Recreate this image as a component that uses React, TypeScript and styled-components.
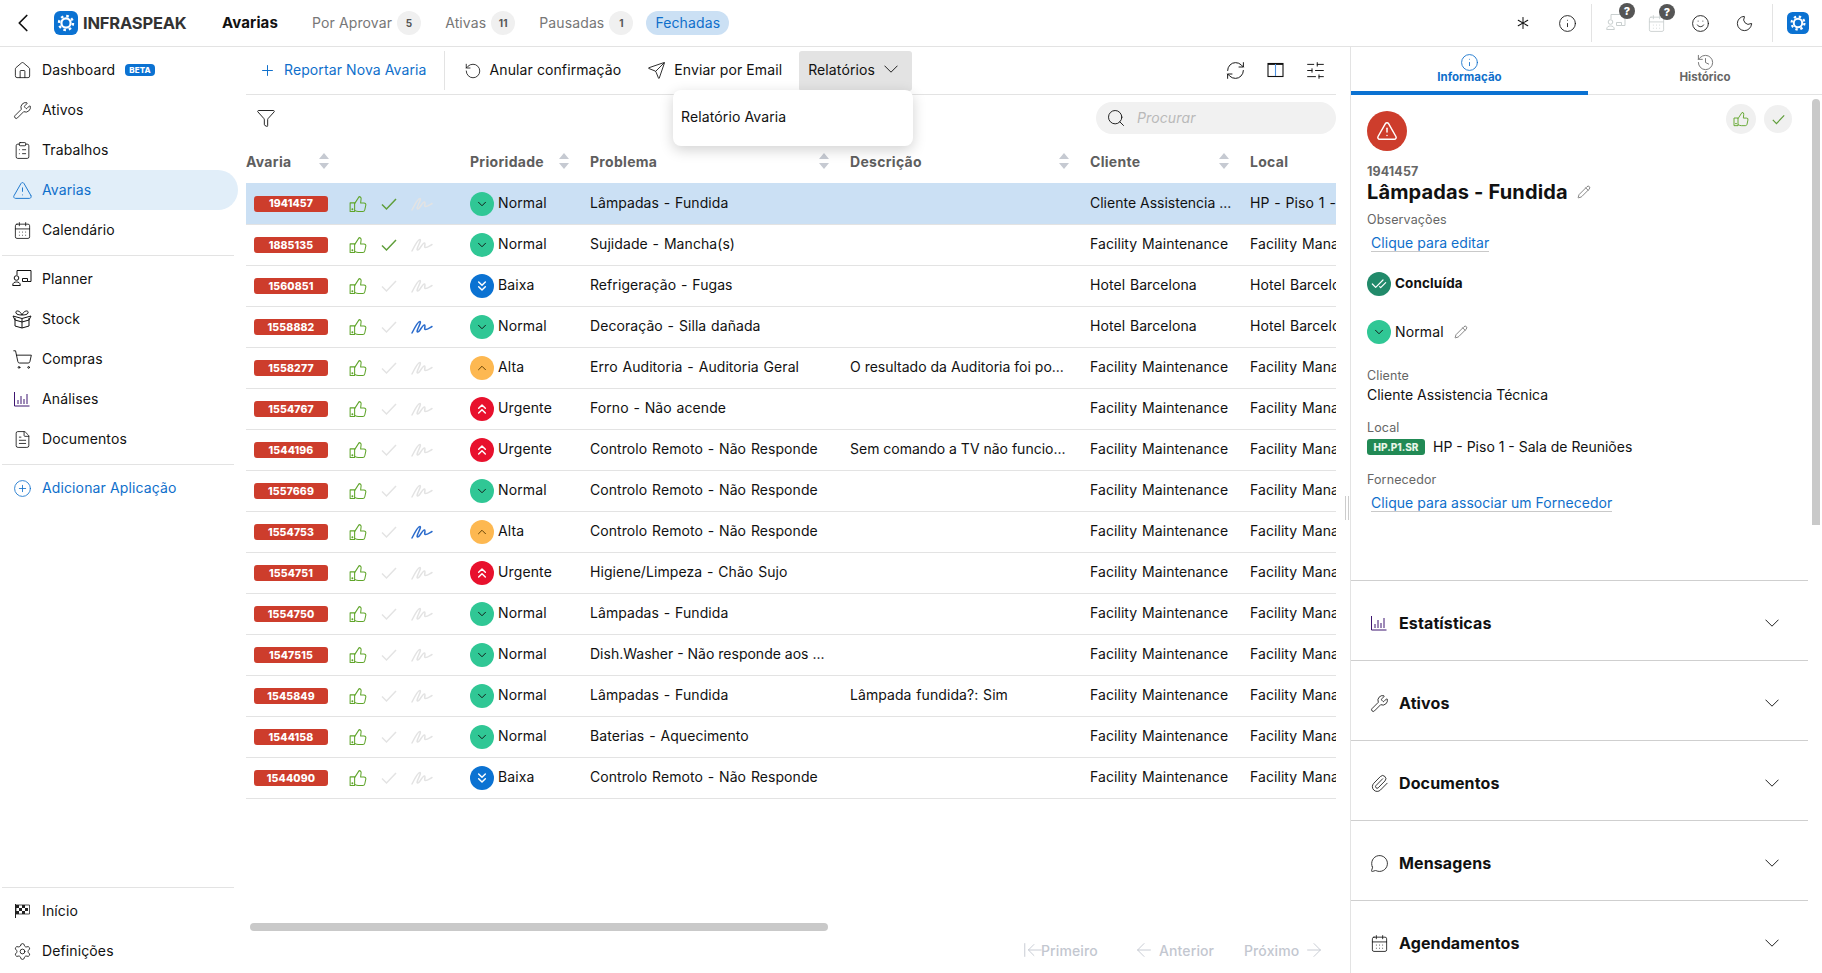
import React from 'react';
import styled, { createGlobalStyle } from 'styled-components';
import {
  House, Wrench, ClipboardList, TriangleAlert, CalendarDays, ShoppingCart, FileText, CirclePlus, Settings,
  Plus, RotateCcw, Send, ChevronDown, ChevronUp, ChevronsDown, ChevronsUp, RefreshCw, SlidersHorizontal, Search,
  Funnel, Info, History, Pencil, CheckCheck, Paperclip, MessageCircle, Smile, Moon, Asterisk, ChevronLeft, ArrowLeft, ArrowRight, ArrowLeftToLine,
} from 'lucide-react';

const Global = createGlobalStyle`
  html, body { margin: 0; padding: 0; height: 100%; overflow: hidden; background: #fff; }
  body { font-family: Inter, "Noto Sans", sans-serif; font-size: 14px; color: #111; letter-spacing: .12px; }
  * { box-sizing: border-box; }
`;

const Page = styled.div`display: flex; flex-direction: column; width: 1822px; height: 973px; overflow: hidden;`;
const IconBox = styled.span<{ $w?: number; $ml?: number }>`display: flex; width: ${p => p.$w ?? 16}px; margin-left: ${p => p.$ml ?? 0}px; justify-content: center; align-items: center; flex: none; svg { flex: none; }`;

/* ---------- header ---------- */
const Header = styled.header`display: flex; align-items: center; height: 47px; border-bottom: 1px solid #e3e3e3; flex: none;`;
const Back = styled.span`display: flex; width: 54px; padding-left: 8px; color: #111;`;
const Brand = styled.div`display: flex; align-items: center; gap: 5px; width: 168px;`;
const BrandName = styled.span`font-size: 16.5px; font-weight: 700; color: #333; letter-spacing: -0.2px; padding-bottom: 1px;`;
const PageName = styled.span`font-size: 15px; font-weight: 700; width: 90px; padding-bottom: 2px;`;
const HTab = styled.span`font-size: 14px; color: #777; display: flex; align-items: center; gap: 5px; margin-right: 24px;`;
const HLabel = styled.span`padding-bottom: 2px;`;
const Count = styled.span`width: 24px; height: 24px; border-radius: 50%; background: #f0f0f0; color: #555; font-size: 10px; font-weight: 700; display: flex; align-items: center; justify-content: center;`;
const HActive = styled.span`font-size: 14px; color: #0f6fcb; background: #cbe0f4; border-radius: 12px; height: 24px; padding: 0 9px 2px; display: flex; align-items: center; margin-left: -11px;`;
const HRight = styled.div`margin-left: auto; display: flex; align-items: center; height: 100%;`;
const HIcon = styled.span<{ $w: number; $pl?: number }>`position: relative; width: ${p => p.$w}px; padding-left: ${p => p.$pl ?? 0}px; display: flex; justify-content: center; align-items: center; color: #111;`;
const HSep = styled.span<{ $ml: number }>`width: 1px; height: 38px; background: #e3e3e3; margin-left: ${p => p.$ml}px;`;
const Help = styled.span<{ $r: number }>`position: absolute; top: -10px; right: ${p => p.$r}px; width: 16px; height: 16px; border-radius: 50%; background: #555; color: #fff; font-size: 11px; font-weight: 800; display: flex; align-items: center; justify-content: center;`;

/* ---------- sidebar ---------- */
const Body = styled.div`display: flex; flex: 1; min-height: 0;`;
const Side = styled.nav`width: 246px; flex: none; display: flex; flex-direction: column; justify-content: space-between; padding: 3px 0 2px;`;
const Group = styled.div`display: flex; flex-direction: column;`;
const NavItem = styled.div<{ $active?: boolean; $link?: boolean }>`
  width: 238px; height: 40px; display: flex; align-items: center; gap: 12px; padding: 0 0 2px 14px; font-size: 14px;
  color: ${p => (p.$active || p.$link ? '#0f6fcb' : '#111')};
  background: ${p => (p.$active ? '#e1eef9' : 'transparent')};
  border-radius: ${p => (p.$active ? '0 20px 20px 0' : '0')};
  ${IconBox} { margin-top: 2px; }
`;
const Beta = styled.span`background: #0b72d2; color: #fff; font-size: 8px; font-weight: 800; border-radius: 4px; padding: 1.5px 4px; line-height: 9px; margin: 2px 0 0 -2px;`;
const SideRule = styled.div`height: 1px; background: #e3e3e3; width: 232px; margin: 5px 0 3px 2px;`;

/* ---------- main ---------- */
const Main = styled.main`width: 1090px; flex: none; display: flex; flex-direction: column; position: relative; margin-right: 14px;`;
const Sash = styled.span`position: absolute; left: 1099px; top: 449px; width: 4px; height: 24px; border-left: 1px solid #ccc; border-right: 1px solid #ccc;`;
const Toolbar = styled.div`height: 48px; border-bottom: 1px solid #e3e3e3; display: flex; align-items: center; flex: none;`;
const Tool = styled.div<{ $link?: boolean; $ml?: number }>`display: flex; align-items: center; gap: 8px; font-size: 14px; letter-spacing: .1px; margin-left: ${p => p.$ml ?? 0}px; color: ${p => (p.$link ? '#0f6fcb' : '#111')};`;
const ToolLabel = styled.span`padding-bottom: 2px;`;
const ToolSep = styled.span`width: 1px; height: 39px; background: #e3e3e3; margin: 0 19px 0 17px;`;
const DropBtn = styled.div`height: 40px; width: 113px; margin-left: 17px; background: #e3e3e3; border-radius: 3px; display: flex; align-items: center; gap: 9px; padding: 0 0 2px 9px; font-size: 14px;`;
const ToolRight = styled.div`margin-left: auto; display: flex; gap: 19px; padding-right: 10px; color: #111;`;
const Menu = styled.div`position: absolute; left: 427px; top: 43px; width: 240px; height: 56px; background: #fff; border-radius: 8px; box-shadow: 0 4px 14px rgba(0,0,0,.18); padding: 0 8px 3px; display: flex; align-items: center; font-size: 14px; z-index: 3;`;
const FilterRow = styled.div`height: 46px; display: flex; align-items: center; justify-content: space-between; padding-left: 10px; flex: none;`;
const SearchBox = styled.div`width: 240px; height: 32px; background: #f1f1f1; border-radius: 16px; display: flex; align-items: center; gap: 11px; padding: 0 0 1px 10px; font-size: 14px; font-style: italic; color: #b9b9b9;`;
const Table = styled.div`overflow: hidden; flex: none;`;
const cols = '94px 130px 120px 260px 240px 160px 200px';
const HeadRow = styled.div`display: grid; grid-template-columns: ${cols}; height: 42px; width: 1204px; align-items: center;`;
const HeadCell = styled.div`position: relative; font-size: 14px; font-weight: 700; color: #5e5e5e; letter-spacing: .3px; padding-bottom: 2px;`;
const Sort = styled.span<{ $x: number }>`position: absolute; left: ${p => p.$x}px; top: -1px; display: flex;`;
const IdBadge = styled.span`display: flex; align-items: center; justify-content: center; margin-left: 8px; width: 74px; height: 16px; background: #cd3d2c; color: #fff; border-radius: 3px; font-size: 10.5px; font-weight: 800;`;
const Acts = styled.div`display: flex; align-items: center; padding-left: 9px;`;
const ActSlot = styled.span<{ $w: number }>`display: flex; width: ${p => p.$w}px;`;
const PrioCell = styled.div`display: flex; align-items: center; gap: 4px;`;
const PrioText = styled.span`padding-bottom: 2px;`;
const Dot = styled.span<{ $bg: string; $fg: string }>`width: 24px; height: 24px; border-radius: 50%; background: ${p => p.$bg}; color: ${p => p.$fg}; display: flex; align-items: center; justify-content: center; flex: none;`;
const Cell = styled.div<{ $cut?: boolean }>`white-space: nowrap; overflow: hidden; letter-spacing: ${p => (p.$cut ? 0 : 0.07)}px; word-spacing: ${p => (p.$cut ? 0 : 0.8)}px;`;
const Row = styled.div<{ $sel?: boolean }>`
  display: grid; grid-template-columns: ${cols}; height: ${p => (p.$sel ? 42 : 41)}px; width: 1204px; align-items: center;
  border-bottom: 1px solid #e3e3e3; background: ${p => (p.$sel ? '#cbe0f4' : '#fff')}; font-size: 14px;
  ${Cell}, ${PrioText} { padding-bottom: ${p => (p.$sel ? 2 : 3)}px; }
`;
const HScroll = styled.div`position: absolute; left: 4px; top: 876px; width: 578px; height: 8px; border-radius: 4px; background: #c9c9c9;`;
const Pager = styled.div`position: absolute; top: 892px; left: 776px; display: flex; color: #c3c7d0; font-size: 14px; font-weight: 500;`;
const PageBtn = styled.span<{ $w: number; $gap: number }>`display: flex; align-items: center; gap: ${p => p.$gap}px; width: ${p => p.$w}px; height: 22px;`;

/* ---------- right panel ---------- */
const Panel = styled.aside`width: 472px; flex: none; border-left: 1px solid #e3e3e3; position: relative; overflow: hidden; display: flex; flex-direction: column;`;
const Tabs = styled.div`display: flex; height: 48px; flex: none; border-bottom: 1px solid #e3e3e3;`;
const TabBtn = styled.div<{ $on?: boolean }>`width: ${p => (p.$on ? 237 : 234)}px; margin-bottom: -1px; display: flex; flex-direction: column; align-items: center; padding-top: 6px; font-size: 11.5px; font-weight: 700; letter-spacing: 0; color: ${p => (p.$on ? '#0f6fcb' : '#666')}; border-bottom: 4px solid ${p => (p.$on ? '#0b72d2' : 'transparent')};`;
const TabLabel = styled.span`margin-top: -2px;`;
const Details = styled.section`height: 485px; flex: none; padding: 16px 30px 0 16px;`;
const TopRow = styled.div`display: flex; justify-content: space-between; align-items: flex-start;`;
const BigAlert = styled.span`width: 40px; height: 40px; border-radius: 50%; background: #cd3d2c; color: #fff; display: flex; align-items: center; justify-content: center;`;
const RoundBtns = styled.div`display: flex; gap: 8px; margin-top: -7px; align-items: center;`;
const RoundBtn = styled.span<{ $d: number }>`width: ${p => p.$d}px; height: ${p => p.$d}px; border-radius: 50%; background: #f0f0f0; display: flex; align-items: center; justify-content: center;`;
const IdText = styled.div`font-size: 12.5px; font-weight: 700; color: #666; line-height: 16px; margin-top: 13px;`;
const Title = styled.h1`margin: 0; font-size: 20px; font-weight: 700; line-height: 24px; letter-spacing: .15px; color: #111; display: flex; align-items: center; gap: 9px;`;
const Label = styled.div<{ $mt: number }>`font-size: 12.5px; color: #666; line-height: 16px; margin-top: ${p => p.$mt}px;`;
const LinkWrap = styled.div<{ $mt: number }>`margin-top: ${p => p.$mt}px; height: 18px;`;
const EditLink = styled.span`display: inline-block; margin-left: 4px; height: 18px; line-height: 17px; font-size: 14px; letter-spacing: .04px; color: #0f6fcb; border-bottom: 1px solid #c9c9c9;`;
const StateRow = styled.div<{ $mt: number }>`display: flex; align-items: center; gap: 4px; height: 24px; margin-top: ${p => p.$mt}px; font-size: 14px;`;
const Bold = styled.span`font-size: 13.5px; font-weight: 700; padding-bottom: 2px;`;
const Concl = styled.span`width: 24px; height: 24px; border-radius: 50%; background: #218a6a; color: #fff; display: flex; align-items: center; justify-content: center;`;
const Value = styled.div`font-size: 14px; line-height: 20px; margin-top: 1px; letter-spacing: 0; display: flex; align-items: center; gap: 8px;`;
const LocBadge = styled.span`width: 58px; height: 16px; border-radius: 3px; background: #218a55; color: #e8f6e8; font-size: 10px; font-weight: 800; display: flex; align-items: center; justify-content: center;`;
const Accordion = styled.div`margin-right: 14px;`;
const AccItem = styled.div`height: 80px; border-top: 1px solid #cfcfcf; display: flex; align-items: center; gap: 12px; padding: 5px 29px 0 20px; font-size: 16px; font-weight: 700; color: #111;`;
const Grow = styled.span`flex: 1;`;
const VScroll = styled.span`position: absolute; right: 2px; top: 52px; width: 8px; height: 426px; border-radius: 4px 4px 0 0; background: #c9c9c9;`;

/* ---------- hand drawn icons ---------- */
const Logo = ({ s }: { s: number }) => (
  <svg width={s} height={s} viewBox="0 0 24 24">
    <rect width="24" height="24" rx="6" fill="#0b72d2" />
    <circle cx="12" cy="12" r="4.6" fill="none" stroke="#fff" strokeWidth="2.2" />
    <circle cx="12" cy="12" r="7" fill="none" stroke="#fff" strokeWidth="2.4" strokeDasharray="2.6 2.9" />
  </svg>
);
const Thumb = ({ s = 18, c = '#5fa52a' }: { s?: number; c?: string }) => (
  <svg width={s} height={s} viewBox="0 0 24 24" fill="none" stroke={c} strokeWidth="1.4" strokeLinejoin="round">
    <rect x="1.5" y="10.5" width="6" height="11.5" />
    <path d="M7.5 20.500c2 1 3.500 1.500 5 1.500h6a2.600 2.600 0 0 0 2.500-2l1.400-6.400a2.400 2.400 0 0 0-2.400-3H15.500l.6-5.200A2.600 2.600 0 0 0 13.500 2.200L7.500 11.500" />
    <circle cx="4.5" cy="19" r=".6" fill={c} />
  </svg>
);
const Tick = ({ c, s = 16 }: { c: string; s?: number }) => (
  <svg width={s} height={s} viewBox="0 0 16 16" fill="none" stroke={c} strokeWidth="1.5"><path d="M1 8.500l4.500 4.500L15 3" /></svg>
);
const Squiggle = ({ c }: { c: string }) => (
  <svg width="22" height="14" viewBox="0 0 22 14" fill="none" stroke={c} strokeWidth="1.5" strokeLinecap="round">
    <path d="M1 13C3 9 7 1 9 1.500 11 2 4.500 11.500 6.500 12 8.500 12.500 11.500 4.500 13.500 5 15 5.500 12.500 9.500 14.500 9.500 16.500 9.500 19 7.500 21 6.500" />
  </svg>
);
const Planner = ({ c = '#111', s = 20 }: { c?: string; s?: number }) => (
  <svg width={s} height={s} viewBox="0 0 20 20" fill="none" stroke={c} strokeWidth="1">
    <path d="M5 6V1.500h14V12.500h-3.500V9.500H10.500v3" /><circle cx="4.5" cy="9" r="2.3" />
    <path d="M.7 16.500c0-3 2-3.500 3.800-3.500s3.800.5 3.800 3.500zM10.500 12.500H15.500" />
  </svg>
);
const Stock = () => (
  <svg width="20" height="20" viewBox="0 0 20 20" fill="none" stroke="#111" strokeWidth="1">
    <path d="M3 9v8l7 2 7-2V9M1 7l9 2.500L19 7M1 7l2 4 7 2 7-2 2-4M10 9.500V19M10 6C8 1 3 1 4 4c.5 1.500 3 2 6 2zM10 6c2-5 7-5 6-2-.5 1.500-3 2-6 2z" />
  </svg>
);
const Bars = ({ s = 16 }: { s?: number }) => (
  <svg width={s} height={s} viewBox="0 0 16 16" fill="none" stroke="#3d1470" strokeWidth="1">
    <path d="M.5 1v14h15M4 13V9M7 13V5M10 13V8M13 13V3" />
  </svg>
);
const Flag = () => (
  <svg width="16" height="16" viewBox="0 0 16 16">
    <path d="M1.500 1v14" stroke="#222" fill="none" />
    <path d="M2 2h13.500v9H2z" fill="none" stroke="#222" strokeWidth=".8" />
    <path d="M2 2h3v3H2zM8 2h3v3H8zM5 5h3v3H5zM11 5h3v3h-3zM2 8h3v3H2zM8 8h3v3H8z" fill="#222" />
  </svg>
);
const SplitPane = () => (
  <svg width="21" height="21" viewBox="0 0 21 21" fill="none">
    <rect x="3" y="3.500" width="15" height="13" stroke="#111" strokeWidth="1.1" />
    <path d="M3 4.200h15" stroke="#111" strokeWidth="1.400" />
    <path d="M10.500 4v12" stroke="#4a90e2" strokeWidth="1.100" />
  </svg>
);
const Caret = () => (
  <svg width="10" height="18" viewBox="0 0 10 18" fill="#c6cad2"><path d="M5 1l5 6H0zM0 11h10l-5 6z" /></svg>
);
const Chev = ({ s = 14 }: { s?: number }) => (
  <svg width={s} height={s * 0.6} viewBox="0 0 14 8" fill="none" stroke="#222" strokeWidth="1"><path d="M.5.5L7 7l6.500-6.500" /></svg>
);

const T = 1.1;
const N = 1.05;

const prios: Record<string, { bg: string; fg: string; I: typeof ChevronDown }> = {
  Normal: { bg: '#30c795', fg: '#111', I: ChevronDown },
  Baixa: { bg: '#0b72d2', fg: '#fff', I: ChevronsDown },
  Alta: { bg: '#fdb851', fg: '#5a3a00', I: ChevronUp },
  Urgente: { bg: '#e8112d', fg: '#fff', I: ChevronsUp },
};
const Prio = ({ p }: { p: string }) => {
  const { bg, fg, I } = prios[p];
  const dbl = p === 'Baixa' || p === 'Urgente';
  return <Dot $bg={bg} $fg={fg}><I size={dbl ? 16 : 14} strokeWidth={dbl ? 2.2 : 1.6} /></Dot>;
};

const FC = 'Facility Maintenance';
const FM = 'Facility Management';
const rows = [
  { id: '1941457', p: 'Normal', prob: 'Lâmpadas - Fundida', d: '', c: 'Cliente Assistencia ...', l: 'HP - Piso 1 - Sala de Reuniões', tick: true, sel: true },
  { id: '1885135', p: 'Normal', prob: 'Sujidade - Mancha(s)', d: '', c: FC, l: FM, tick: true },
  { id: '1560851', p: 'Baixa', prob: 'Refrigeração - Fugas', d: '', c: 'Hotel Barcelona', l: 'Hotel Barcelona' },
  { id: '1558882', p: 'Normal', prob: 'Decoração - Silla dañada', d: '', c: 'Hotel Barcelona', l: 'Hotel Barcelona', sig: true },
  { id: '1558277', p: 'Alta', prob: 'Erro Auditoria - Auditoria Geral', d: 'O resultado da Auditoria foi po...', c: FC, l: FM },
  { id: '1554767', p: 'Urgente', prob: 'Forno - Não acende', d: '', c: FC, l: FM },
  { id: '1544196', p: 'Urgente', prob: 'Controlo Remoto - Não Responde', d: 'Sem comando a TV não funcio...', c: FC, l: FM },
  { id: '1557669', p: 'Normal', prob: 'Controlo Remoto - Não Responde', d: '', c: FC, l: FM },
  { id: '1554753', p: 'Alta', prob: 'Controlo Remoto - Não Responde', d: '', c: FC, l: FM, sig: true },
  { id: '1554751', p: 'Urgente', prob: 'Higiene/Limpeza - Chão Sujo', d: '', c: FC, l: FM },
  { id: '1554750', p: 'Normal', prob: 'Lâmpadas - Fundida', d: '', c: FC, l: FM },
  { id: '1547515', p: 'Normal', prob: 'Dish.Washer - Não responde aos ...', d: '', c: FC, l: FM },
  { id: '1545849', p: 'Normal', prob: 'Lâmpadas - Fundida', d: 'Lâmpada fundida?: Sim', c: FC, l: FM },
  { id: '1544158', p: 'Normal', prob: 'Baterias - Aquecimento', d: '', c: FC, l: FM },
  { id: '1544090', p: 'Baixa', prob: 'Controlo Remoto - Não Responde', d: '', c: FC, l: FM },
];

const heads: [string, number | null][] = [
  ['Avaria', 73], ['', null], ['Prioridade', 89], ['Problema', 229], ['Descrição', 209], ['Cliente', 129], ['Local', null],
];

const cut = (s: string) => s.endsWith('...');

export default function App() {
  return (
    <Page>
      <Global />
      <Header>
        <Back><ChevronLeft size={30} strokeWidth={1.4} /></Back>
        <Brand><Logo s={24} /><BrandName>INFRASPEAK</BrandName></Brand>
        <PageName>Avarias</PageName>
        <HTab><HLabel>Por Aprovar</HLabel><Count>5</Count></HTab>
        <HTab><HLabel>Ativas</HLabel><Count>11</Count></HTab>
        <HTab><HLabel>Pausadas</HLabel><Count>1</Count></HTab>
        <HActive>Fechadas</HActive>
        <HRight>
          <HIcon $w={44}><Asterisk size={22} strokeWidth={1.1} /></HIcon>
          <HIcon $w={44}><Info size={19} strokeWidth={T} /></HIcon>
          <HSep $ml={2} />
          <HIcon $w={42} $pl={6}><Planner c="#c9cfcf" s={20} /><Help $r={-1}>?</Help></HIcon>
          <HIcon $w={44}><CalendarDays size={19} strokeWidth={T} color="#c9cfcf" /><Help $r={3}>?</Help></HIcon>
          <HIcon $w={44}><Smile size={19} strokeWidth={T} /></HIcon>
          <HIcon $w={44}><Moon size={19} strokeWidth={T} /></HIcon>
          <HSep $ml={6} />
          <HIcon $w={49}><Logo s={22} /></HIcon>
        </HRight>
      </Header>
      <Body>
        <Side>
          <Group>
            <NavItem><IconBox><House size={19} strokeWidth={N} /></IconBox>Dashboard <Beta>BETA</Beta></NavItem>
            <NavItem><IconBox><Wrench size={19} strokeWidth={N} /></IconBox>Ativos</NavItem>
            <NavItem><IconBox><ClipboardList size={19} strokeWidth={N} /></IconBox>Trabalhos</NavItem>
            <NavItem $active><IconBox><TriangleAlert size={21} strokeWidth={N} /></IconBox>Avarias</NavItem>
            <NavItem><IconBox><CalendarDays size={19} strokeWidth={N} /></IconBox>Calendário</NavItem>
            <SideRule />
            <NavItem><IconBox><Planner s={20} /></IconBox>Planner</NavItem>
            <NavItem><IconBox><Stock /></IconBox>Stock</NavItem>
            <NavItem><IconBox><ShoppingCart size={21} strokeWidth={N} /></IconBox>Compras</NavItem>
            <NavItem><IconBox><Bars /></IconBox>Análises</NavItem>
            <NavItem><IconBox><FileText size={19} strokeWidth={N} /></IconBox>Documentos</NavItem>
            <SideRule />
            <NavItem $link><IconBox><CirclePlus size={19} strokeWidth={N} /></IconBox>Adicionar Aplicação</NavItem>
          </Group>
          <Group>
            <SideRule />
            <NavItem><IconBox><Flag /></IconBox>Início</NavItem>
            <NavItem><IconBox><Settings size={19} strokeWidth={N} /></IconBox>Definições</NavItem>
          </Group>
        </Side>

        <Main>
          <Toolbar>
            <Tool $link $ml={13}><Plus size={17} strokeWidth={1.4} /><ToolLabel>Reportar Nova Avaria</ToolLabel></Tool>
            <ToolSep />
            <Tool><RotateCcw size={18} strokeWidth={T} /><ToolLabel>Anular confirmação</ToolLabel></Tool>
            <Tool $ml={26}><Send size={19} strokeWidth={T} /><ToolLabel>Enviar por Email</ToolLabel></Tool>
            <DropBtn>Relatórios <Chev /></DropBtn>
            <ToolRight>
              <RefreshCw size={21} strokeWidth={T} />
              <SplitPane />
              <SlidersHorizontal size={21} strokeWidth={T} />
            </ToolRight>
          </Toolbar>
          <Menu>Relatório Avaria</Menu>
          <FilterRow>
            <Funnel size={20} strokeWidth={T} />
            <SearchBox><Search size={20} strokeWidth={T} color="#111" />Procurar</SearchBox>
          </FilterRow>
          <Table>
            <HeadRow>
              {heads.map(([h, x], i) => (
                <HeadCell key={i}>{h}{x !== null && <Sort $x={x}><Caret /></Sort>}</HeadCell>
              ))}
            </HeadRow>
            {rows.map(r => (
              <Row key={r.id} $sel={r.sel}>
                <IdBadge>{r.id}</IdBadge>
                <Acts>
                  <ActSlot $w={32}><Thumb /></ActSlot>
                  <ActSlot $w={30}><Tick c={r.tick ? '#5f9e3a' : '#e3e3e3'} /></ActSlot>
                  <ActSlot $w={24}><Squiggle c={r.sig ? '#2a6bcc' : '#e3e3e3'} /></ActSlot>
                </Acts>
                <PrioCell><Prio p={r.p} /><PrioText>{r.p}</PrioText></PrioCell>
                <Cell $cut={cut(r.prob)}>{r.prob}</Cell>
                <Cell $cut={cut(r.d)}>{r.d}</Cell>
                <Cell $cut={cut(r.c)}>{r.c}</Cell>
                <Cell>{r.l}</Cell>
              </Row>
            ))}
          </Table>
          <HScroll />
          <Sash />
          <Pager>
            <PageBtn $w={113} $gap={0}><IconBox $w={17} $ml={2}><ArrowLeftToLine size={22} strokeWidth={1} /></IconBox>Primeiro</PageBtn>
            <PageBtn $w={109} $gap={7}><IconBox $w={17}><ArrowLeft size={22} strokeWidth={1} /></IconBox>Anterior</PageBtn>
            <PageBtn $w={90} $gap={6}>Próximo<IconBox $w={17}><ArrowRight size={22} strokeWidth={1} /></IconBox></PageBtn>
          </Pager>
        </Main>

        <Panel>
          <Tabs>
            <TabBtn $on><Info size={19} strokeWidth={T} /><TabLabel>Informação</TabLabel></TabBtn>
            <TabBtn><History size={19} strokeWidth={T} /><TabLabel>Histórico</TabLabel></TabBtn>
          </Tabs>
          <Details>
            <TopRow>
              <BigAlert><TriangleAlert size={22} strokeWidth={1.6} /></BigAlert>
              <RoundBtns>
                <RoundBtn $d={30}><Thumb s={16} /></RoundBtn>
                <RoundBtn $d={28}><Tick c="#5f9e3a" s={13} /></RoundBtn>
              </RoundBtns>
            </TopRow>
            <IdText>1941457</IdText>
            <Title>Lâmpadas - Fundida <Pencil size={14} strokeWidth={1.1} color="#444" /></Title>
            <Label $mt={8}>Observações</Label>
            <LinkWrap $mt={6}><EditLink>Clique para editar</EditLink></LinkWrap>
            <StateRow $mt={20}><Concl><CheckCheck size={16} strokeWidth={1.8} /></Concl><Bold>Concluída</Bold></StateRow>
            <StateRow $mt={24}><Prio p="Normal" /><PrioText>Normal</PrioText><IconBox $w={14} $ml={6}><Pencil size={14} strokeWidth={1.1} color="#444" /></IconBox></StateRow>
            <Label $mt={24}>Cliente</Label>
            <Value>Cliente Assistencia Técnica</Value>
            <Label $mt={15}>Local</Label>
            <Value><LocBadge>HP.P1.SR</LocBadge>HP - Piso 1 - Sala de Reuniões</Value>
            <Label $mt={15}>Fornecedor</Label>
            <LinkWrap $mt={6}><EditLink>Clique para associar um Fornecedor</EditLink></LinkWrap>
          </Details>
          <Accordion>
            <AccItem><Bars />Estatísticas<Grow /><Chev /></AccItem>
            <AccItem><IconBox><Wrench size={19} strokeWidth={N} /></IconBox>Ativos<Grow /><Chev /></AccItem>
            <AccItem><IconBox><Paperclip size={19} strokeWidth={N} /></IconBox>Documentos<Grow /><Chev /></AccItem>
            <AccItem><IconBox><MessageCircle size={19} strokeWidth={N} /></IconBox>Mensagens<Grow /><Chev /></AccItem>
            <AccItem><IconBox><CalendarDays size={19} strokeWidth={N} /></IconBox>Agendamentos<Grow /><Chev /></AccItem>
          </Accordion>
          <VScroll />
        </Panel>
      </Body>
    </Page>
  );
}
